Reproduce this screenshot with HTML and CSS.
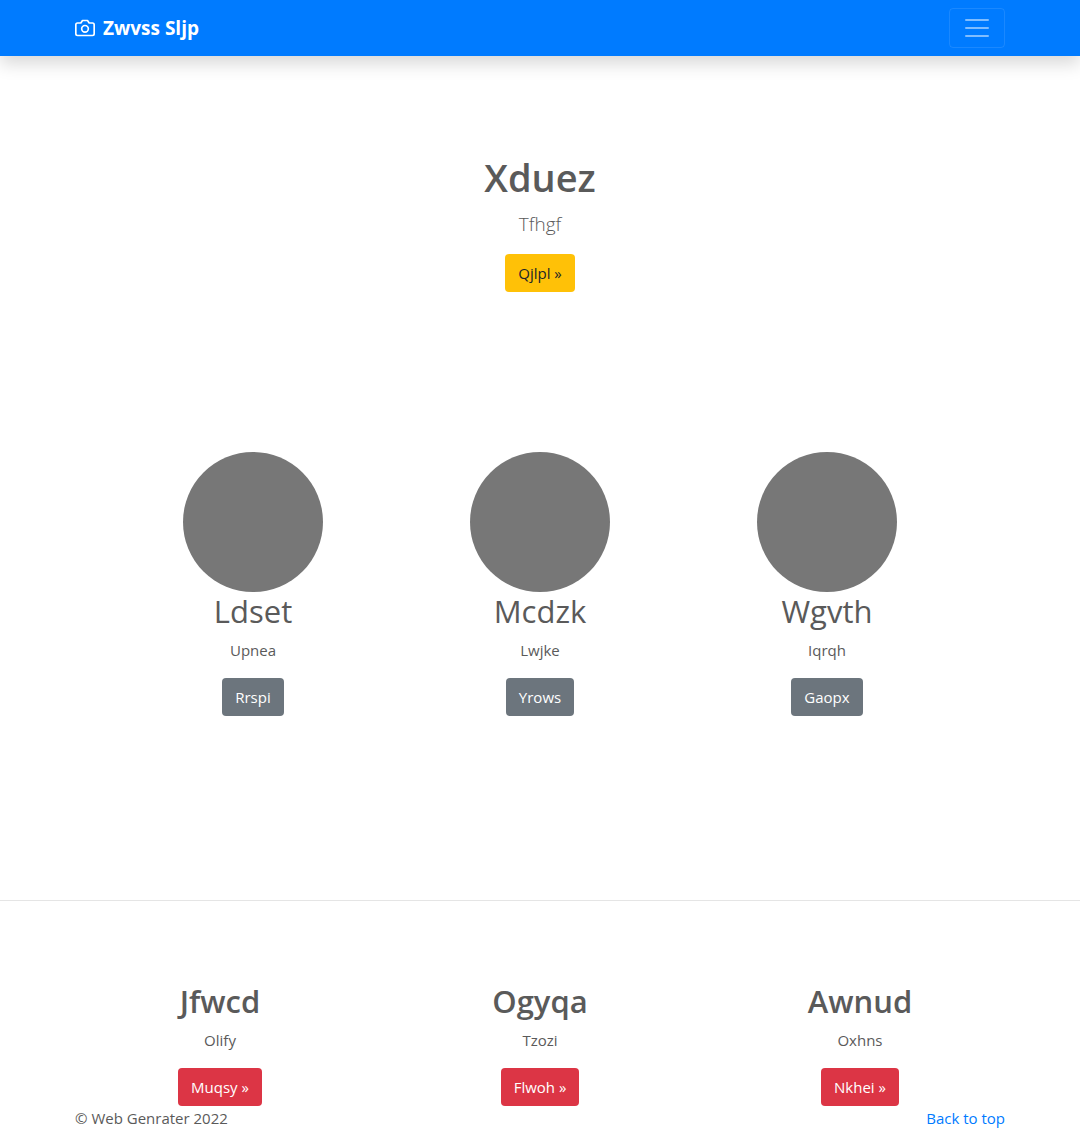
FILE: index.html
```html
<!DOCTYPE html>
<html lang="en">
<head>
<meta charset="utf-8">
<meta name="viewport" content="width=device-width, initial-scale=1">
<title>Zwvss Sljp</title>
<link rel="stylesheet" href="styles.css">
</head>
<body id="top">
<header class="navbar">
  <div class="container navbar-inner">
    <a class="brand" href="#top">
      <svg class="brand-icon" width="20" height="20" viewBox="0 0 24 24" fill="none" stroke="currentColor" stroke-width="2" stroke-linecap="round" stroke-linejoin="round" aria-hidden="true"><path d="M23 19a2 2 0 0 1-2 2H3a2 2 0 0 1-2-2V8a2 2 0 0 1 2-2h4l2-3h6l2 3h4a2 2 0 0 1 2 2z"/><circle cx="12" cy="13" r="4"/></svg>
      <strong>Zwvss Sljp</strong>
    </a>
    <button class="toggler" type="button" aria-label="Toggle navigation">
      <svg width="30" height="30" viewBox="0 0 30 30" stroke="currentColor" stroke-width="2" stroke-linecap="round" stroke-miterlimit="10" aria-hidden="true"><path d="M4 7h22M4 15h22M4 23h22"/></svg>
    </button>
  </div>
</header>
<main>
  <section class="hero">
    <h1 class="hero-title">Xduez</h1>
    <p class="lead">Tfhgf</p>
    <a class="btn btn-warning" href="#">Qjlpl »</a>
  </section>
  <section class="profiles">
    <div class="column">
      <div class="avatar"></div>
      <h2 class="title">Ldset</h2>
      <p class="text">Upnea</p>
      <a class="btn btn-secondary" href="#">Rrspi</a>
    </div>
    <div class="column">
      <div class="avatar"></div>
      <h2 class="title">Mcdzk</h2>
      <p class="text">Lwjke</p>
      <a class="btn btn-secondary" href="#">Yrows</a>
    </div>
    <div class="column">
      <div class="avatar"></div>
      <h2 class="title">Wgvth</h2>
      <p class="text">Iqrqh</p>
      <a class="btn btn-secondary" href="#">Gaopx</a>
    </div>
  </section>
  <hr class="divider">
  <section class="features">
    <div class="column">
      <h2 class="title title-strong">Jfwcd</h2>
      <p class="text">Olify</p>
      <a class="btn btn-danger" href="#">Muqsy »</a>
    </div>
    <div class="column">
      <h2 class="title title-strong">Ogyqa</h2>
      <p class="text">Tzozi</p>
      <a class="btn btn-danger" href="#">Flwoh »</a>
    </div>
    <div class="column">
      <h2 class="title title-strong">Awnud</h2>
      <p class="text">Oxhns</p>
      <a class="btn btn-danger" href="#">Nkhei »</a>
    </div>
  </section>
</main>
<footer class="container footer">
  <span>© Web Genrater 2022</span>
  <a class="top-link" href="#top">Back to top</a>
</footer>
</body>
</html>
```
FILE: styles.css
```css
* {
  box-sizing: border-box;
}

body {
  margin: 0;
  background: #fff;
  color: #5a5a5a;
  font-family: "Segoe UI", "Open Sans", "Noto Sans", sans-serif;
  font-size: 15px;
  line-height: 24px;
}

h1, h2, p {
  margin: 0;
}

.container {
  width: 100%;
  max-width: 960px;
  margin: 0 auto;
  padding: 0 15px;
}

.navbar {
  padding: 8px 0;
  background: #007bff;
  box-shadow: 0 8px 16px rgba(0, 0, 0, .15);
}

.navbar-inner {
  display: flex;
  align-items: center;
  justify-content: space-between;
}

.brand {
  display: flex;
  align-items: center;
  gap: 8px;
  color: #fff;
  font-size: 19px;
  line-height: 30px;
  text-decoration: none;
}

.toggler {
  display: flex;
  padding: 4px 12px;
  border: 1px solid rgba(255, 255, 255, .1);
  border-radius: 4px;
  background: transparent;
  color: rgba(255, 255, 255, .5);
}

.hero {
  display: flex;
  flex-direction: column;
  align-items: center;
  padding: 99px 15px 160px;
}

.hero-title {
  margin-bottom: 12px;
  font-size: 38px;
  font-weight: 600;
  line-height: 44px;
}

.lead {
  margin-bottom: 16px;
  font-size: 19px;
  font-weight: 300;
  line-height: 27px;
}

.btn {
  padding: 6px 12px;
  border: 1px solid transparent;
  border-radius: 4px;
  color: #fff;
  text-decoration: none;
}

.btn-warning {
  background: #ffc107;
  color: #212529;
}

.btn-secondary {
  background: #6c757d;
}

.btn-danger {
  background: #dc3545;
}

.profiles,
.features {
  display: grid;
  grid-template-columns: repeat(3, 1fr);
  margin: 0 auto;
}

.profiles {
  max-width: 861px;
  padding-bottom: 184px;
}

.features {
  max-width: 960px;
  padding-top: 81px;
}

.column {
  display: flex;
  flex-direction: column;
  align-items: center;
}

.avatar {
  width: 140px;
  height: 140px;
  border-radius: 50%;
  background: #777;
}

.title {
  margin-bottom: 8px;
  font-size: 31px;
  font-weight: 400;
  line-height: 38px;
}

.title-strong {
  font-weight: 600;
}

.text {
  margin-bottom: 16px;
}

.divider {
  margin: 0;
  border: 0;
  border-top: 1px solid rgba(0, 0, 0, .1);
}

.footer {
  display: flex;
  justify-content: space-between;
}

.top-link {
  color: #007bff;
  text-decoration: none;
}
```
